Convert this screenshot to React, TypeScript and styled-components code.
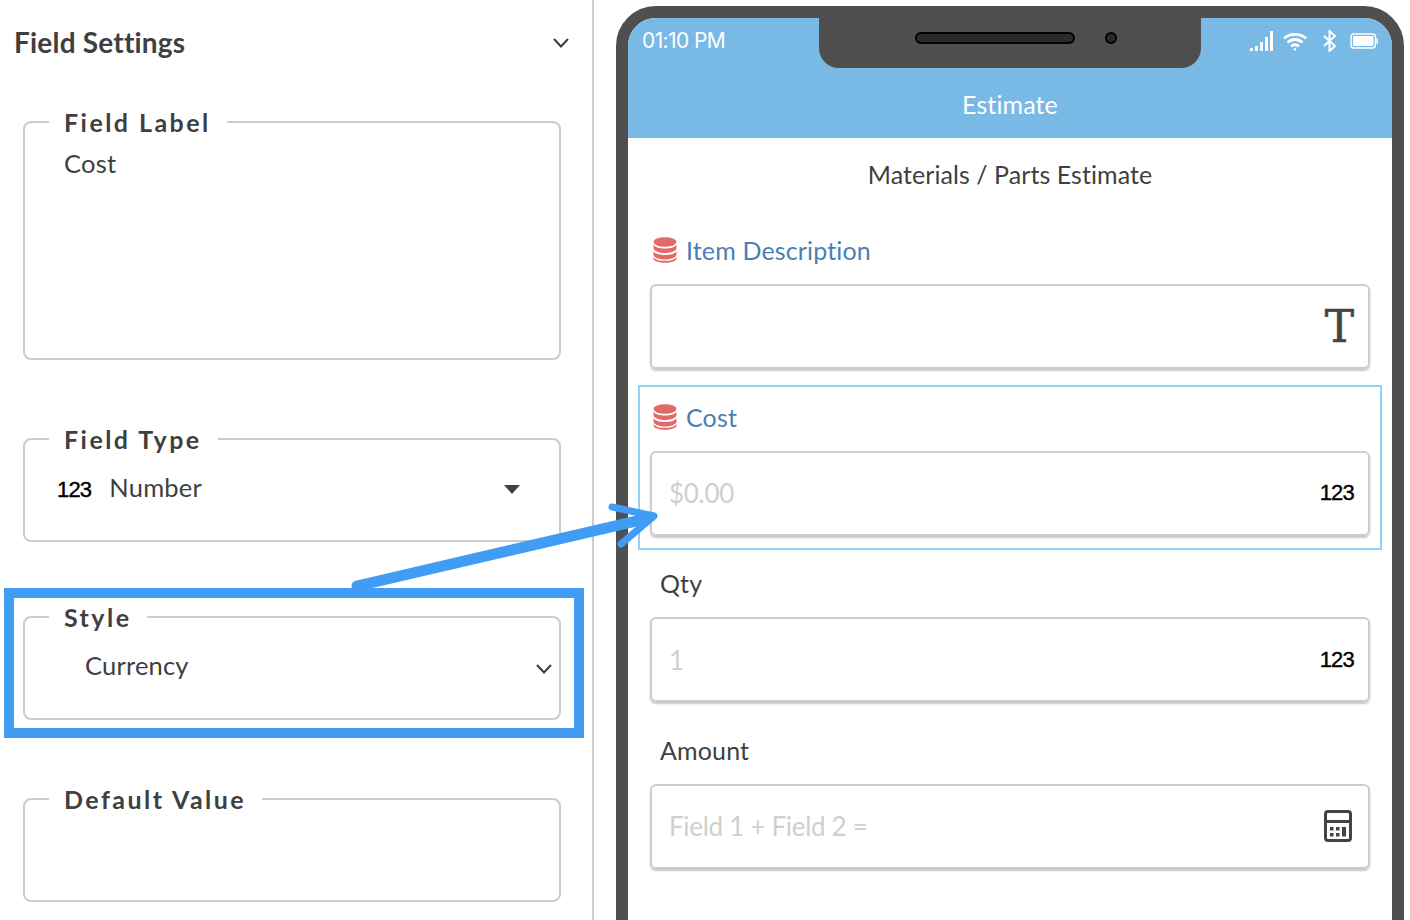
import React from 'react';
import styled, { createGlobalStyle } from 'styled-components';

const GlobalStyle = createGlobalStyle`
  html, body {
    margin: 0;
    padding: 0;
    background: #fff;
  }
  * {
    box-sizing: border-box;
  }
`;

function DatabaseIcon() {
  return (
    <svg width="24" height="26" viewBox="0 0 24 26">
      <ellipse cx="12" cy="5" rx="11.5" ry="4.8" fill="#e26a66" />
      <path d="M.5 7.5C2 10.5 7 11.5 12 11.5s10-1 11.5-4v3.5c0 2.8-5.2 5-11.5 5S.5 13.800.5 11z" fill="#e26a66" />
      <path d="M.5 14C2 17 7 18 12 18s10-1 11.5-4v3.500c0 2.800-5.200 5-11.500 5S.5 20.300.5 17.500z" fill="#e26a66" />
      <path d="M.5 20C2 23 7 23.800 12 23.800S22 23 23.500 20v1.500c0 2.500-5.200 4.300-11.500 4.300S.5 24 .5 21.500z" fill="#e26a66" />
    </svg>
  );
}

function SignalIcon() {
  return (
    <svg width="24" height="20" viewBox="0 0 24 20" fill="#fff">
      <rect x="0" y="17" width="3" height="3" />
      <rect x="5" y="15" width="3" height="5" />
      <rect x="10" y="11" width="3" height="9" opacity="0.9" />
      <rect x="15" y="6" width="3" height="14" />
      <rect x="20" y="0" width="3" height="20" />
    </svg>
  );
}

function WifiIcon() {
  return (
    <svg width="24" height="19" viewBox="0 0 24 19" fill="none" stroke="#fff" strokeWidth="2.800">
      <path d="M1 6.500C7 1 17 1 23 6.500" />
      <path d="M4.500 10.500C9 6.500 15 6.500 19.500 10.500" />
      <path d="M8 14.300c2.500-2 5.500-2 8 0" />
      <circle cx="12" cy="17.200" r="1.300" fill="#fff" stroke="none" />
    </svg>
  );
}

function BluetoothIcon() {
  return (
    <svg width="14" height="22" viewBox="0 0 14 22" fill="none" stroke="#fff" strokeWidth="2">
      <path d="M1 6l11 10-5.500 5V1L12 6 1 16" />
    </svg>
  );
}

function BatteryIcon() {
  return (
    <svg width="28" height="18" viewBox="0 0 28 18">
      <rect x="1" y="2" width="24.500" height="14" rx="3" fill="none" stroke="#fff" strokeWidth="1.500" />
      <rect x="3" y="4" width="20.500" height="10" rx="1" fill="#fff" />
      <rect x="26.500" y="6.500" width="1.500" height="5" fill="#fff" />
    </svg>
  );
}

function CalculatorIcon() {
  return (
    <svg width="28" height="32" viewBox="0 0 28 32">
      <rect x="1.500" y="1.500" width="25" height="29" rx="2.500" fill="none" stroke="#444" strokeWidth="3" />
      <rect x="2" y="10" width="24" height="3" fill="#444" />
      <rect x="6" y="17" width="3.500" height="3.500" fill="#444" />
      <rect x="12" y="17" width="3.500" height="3.500" fill="#444" />
      <rect x="6" y="23" width="3.500" height="3.500" fill="#444" />
      <rect x="12" y="23" width="3.500" height="3.500" fill="#444" />
      <rect x="18" y="17" width="4" height="9.500" fill="#444" />
    </svg>
  );
}

function Chevron() {
  return (
    <svg width="16" height="10" viewBox="0 0 16 10" fill="none" stroke="#3c3c3e" strokeWidth="2">
      <path d="M1 1l7 7.500L15 1" />
    </svg>
  );
}

export default function App() {
  return (
    <Page>
      <GlobalStyle />
      <SettingsPanel>
        <PanelHeader>
          <PanelTitle>Field Settings</PanelTitle>
          <Chevron />
        </PanelHeader>
        <FieldGroup $height={253}>
          <GroupLegend>Field Label</GroupLegend>
          <GroupValue $top={11} $indent={39}>Cost</GroupValue>
        </FieldGroup>
        <FieldGroup $height={118} $gap={64}>
          <GroupLegend>Field Type</GroupLegend>
          <GroupValue $top={19} $indent={32} $right={39}>
            <span>
              <NumberGlyph>123</NumberGlyph>
              <TypeName>Number</TypeName>
            </span>
            <Caret />
          </GroupValue>
        </FieldGroup>
        <Highlight>
          <FieldGroup $height={118}>
            <GroupLegend>Style</GroupLegend>
            <GroupValue $top={18} $indent={60} $right={7}>
              Currency
              <Chevron />
            </GroupValue>
          </FieldGroup>
        </Highlight>
        <FieldGroup $height={118} $gap={46}>
          <GroupLegend>Default Value</GroupLegend>
        </FieldGroup>
      </SettingsPanel>

      <Phone>
        <Notch>
          <Speaker />
          <Camera />
        </Notch>
        <AppBar>
          <StatusBar>
            <StatusTime>01:10 PM</StatusTime>
            <StatusIcons>
              <SignalIcon />
              <WifiIcon />
              <BluetoothIcon />
              <BatteryIcon />
            </StatusIcons>
          </StatusBar>
          <AppTitle>Estimate</AppTitle>
        </AppBar>
        <Subtitle>Materials / Parts Estimate</Subtitle>
        <FormField>
          <FieldLabel $linked>
            <DatabaseIcon />
            Item Description
          </FieldLabel>
          <InputBox>
            <TextGlyph>T</TextGlyph>
          </InputBox>
        </FormField>
        <FormField $selected>
          <FieldLabel $linked>
            <DatabaseIcon />
            Cost
          </FieldLabel>
          <InputBox>
            <Placeholder>$0.00</Placeholder>
            <NumberGlyph>123</NumberGlyph>
          </InputBox>
        </FormField>
        <FormField>
          <FieldLabel>Qty</FieldLabel>
          <InputBox>
            <Placeholder>1</Placeholder>
            <NumberGlyph>123</NumberGlyph>
          </InputBox>
        </FormField>
        <FormField>
          <FieldLabel>Amount</FieldLabel>
          <InputBox>
            <Placeholder>Field 1 + Field 2 =</Placeholder>
            <CalculatorIcon />
          </InputBox>
        </FormField>
      </Phone>

      <Arrow width="1410" height="920" viewBox="0 0 1410 920">
        <ArrowShaft d="M357 586L645 519" />
        <ArrowHead d="M612 507L654 516L621 544" />
      </Arrow>
    </Page>
  );
}

const Page = styled.div`
  position: relative;
  display: flex;
  align-items: flex-start;
  width: 1410px;
  height: 920px;
  overflow: hidden;
  font-family: Lato, "Liberation Sans", sans-serif;
  color: #3f3f41;
`;

const SettingsPanel = styled.div`
  flex: none;
  width: 594px;
  height: 920px;
  border-right: 2px solid #ccc;
  padding-left: 23px;
`;

const PanelHeader = styled.div`
  display: flex;
  align-items: center;
  justify-content: space-between;
  height: 86px;
  margin: 0 23px 21px -9px;
`;

const PanelTitle = styled.div`
  margin-top: -2px;
  font-size: 28px;
  font-weight: 700;
  letter-spacing: 0.200px;
`;

const FieldGroup = styled.fieldset<{ $height: number; $gap?: number }>`
  display: block;
  width: 538px;
  height: ${(p) => p.$height}px;
  margin: ${(p) => p.$gap ?? 0}px 0 0;
  padding: 0;
  border: 2px solid #ccc;
  border-radius: 8px;
`;

const GroupLegend = styled.legend`
  margin-left: 24px;
  padding: 0 16px 0 15px;
  height: 30px;
  font-size: 25px;
  line-height: 30px;
  font-weight: 700;
  letter-spacing: 2.450px;
`;

const GroupValue = styled.div<{ $top: number; $indent: number; $right?: number }>`
  display: flex;
  align-items: center;
  justify-content: space-between;
  margin-top: ${(p) => p.$top}px;
  padding: 0 ${(p) => p.$right ?? 0}px 0 ${(p) => p.$indent}px;
  height: 30px;
  font-size: 25.500px;
  line-height: 30px;
  letter-spacing: 0.200px;

  & > svg {
    margin-top: 8px;
  }
`;

const TypeName = styled.span`
  margin-left: 18px;
`;

const NumberGlyph = styled.span`
  font-family: "Liberation Sans", sans-serif;
  font-size: 22px;
  font-weight: 400;
  letter-spacing: -0.800px;
  color: #000;
  -webkit-text-stroke: 0.400px #000;
`;

const Caret = styled.span`
  width: 0;
  height: 0;
  margin-top: 2px;
  border-left: 8px solid transparent;
  border-right: 8px solid transparent;
  border-top: 9px solid #3f3f41;
`;

const Highlight = styled.div`
  width: 580px;
  height: 150px;
  margin: 46px 0 0 -19px;
  padding: 4px 0 0 9px;
  border: 10px solid #419cf4;
`;

const Phone = styled.div`
  position: relative;
  flex: none;
  width: 788px;
  height: 1000px;
  margin: 6px 0 0 22px;
  border: 12px solid #4f4f4f;
  border-radius: 40px 40px 0 0;
  overflow: hidden;
  background: #fff;
`;

const Notch = styled.div`
  position: absolute;
  top: 0;
  left: 191px;
  width: 382px;
  height: 50px;
  background: #4f4e4d;
  border-radius: 0 0 20px 20px;
`;

const Speaker = styled.div`
  position: absolute;
  top: 14px;
  left: 96px;
  width: 160px;
  height: 12px;
  background: #2b2a28;
  border: 2px solid #000;
  border-radius: 6px;
`;

const Camera = styled.div`
  position: absolute;
  top: 14px;
  left: 286px;
  width: 12px;
  height: 12px;
  background: #2b2a28;
  border: 2px solid #000;
  border-radius: 50%;
`;

const AppBar = styled.div`
  height: 120px;
  background: #78b9e5;
  color: #fff;
`;

const StatusBar = styled.div`
  display: flex;
  align-items: center;
  justify-content: space-between;
  height: 46px;
  padding: 0 14px 0 14px;
`;

const StatusTime = styled.div`
  margin-top: -1px;
  font-family: Inter, sans-serif;
  font-size: 21px;
  letter-spacing: -0.600px;
`;

const StatusIcons = styled.div`
  display: flex;
  align-items: center;

  & > :nth-child(1) {
    margin-right: 9px;
  }
  & > :nth-child(2) {
    margin-right: 16px;
  }
  & > :nth-child(3) {
    margin-right: 13px;
  }
`;

const AppTitle = styled.div`
  margin-top: 8px;
  height: 74px;
  font-size: 25px;
  line-height: 64px;
  letter-spacing: 0.100px;
  text-align: center;
`;

const Subtitle = styled.div`
  height: 36px;
  margin: 18px 0 26px;
  font-size: 25px;
  line-height: 36px;
  letter-spacing: 0.060px;
  text-align: center;
`;

const FormField = styled.div<{ $selected?: boolean }>`
  height: 165px;
  margin: 0 10px 1.670px;
  padding: 12px 10px 0;
  border: 2px solid ${(p) => (p.$selected ? '#8fd3f7' : 'transparent')};
`;

const FieldLabel = styled.div<{ $linked?: boolean }>`
  display: flex;
  align-items: center;
  gap: 9px;
  height: 36px;
  margin-bottom: 16px;
  padding-left: ${(p) => (p.$linked ? 3 : 10)}px;
  font-size: 25px;
  letter-spacing: 0.150px;
  color: ${(p) => (p.$linked ? '#4a7fb4' : '#3f3f41')};
`;

const InputBox = styled.div`
  display: flex;
  align-items: center;
  justify-content: space-between;
  height: 85px;
  padding: 0 14px 0 17px;
  border: 2px solid #ccc;
  border-radius: 6px;
  box-shadow: 0 2px 2px rgba(0, 0, 0, 0.22);

  & > :only-child {
    margin-left: auto;
  }

  & > svg {
    margin-right: 2px;
  }
`;

const Placeholder = styled.span`
  font-size: 26px;
  letter-spacing: -0.300px;
  color: #cfcfcf;
`;

const TextGlyph = styled.span`
  font-family: "DejaVu Serif", serif;
  font-size: 44px;
  line-height: 44px;
  font-weight: 400;
  color: #444;
  -webkit-text-stroke: 0.600px #444;
`;

const Arrow = styled.svg`
  position: absolute;
  top: 0;
  left: 0;
  pointer-events: none;
  fill: none;
  stroke: #419cf4;
  stroke-linecap: round;
  stroke-linejoin: round;
`;

const ArrowShaft = styled.path`
  stroke-width: 11px;
`;

const ArrowHead = styled.path`
  stroke-width: 7px;
`;
